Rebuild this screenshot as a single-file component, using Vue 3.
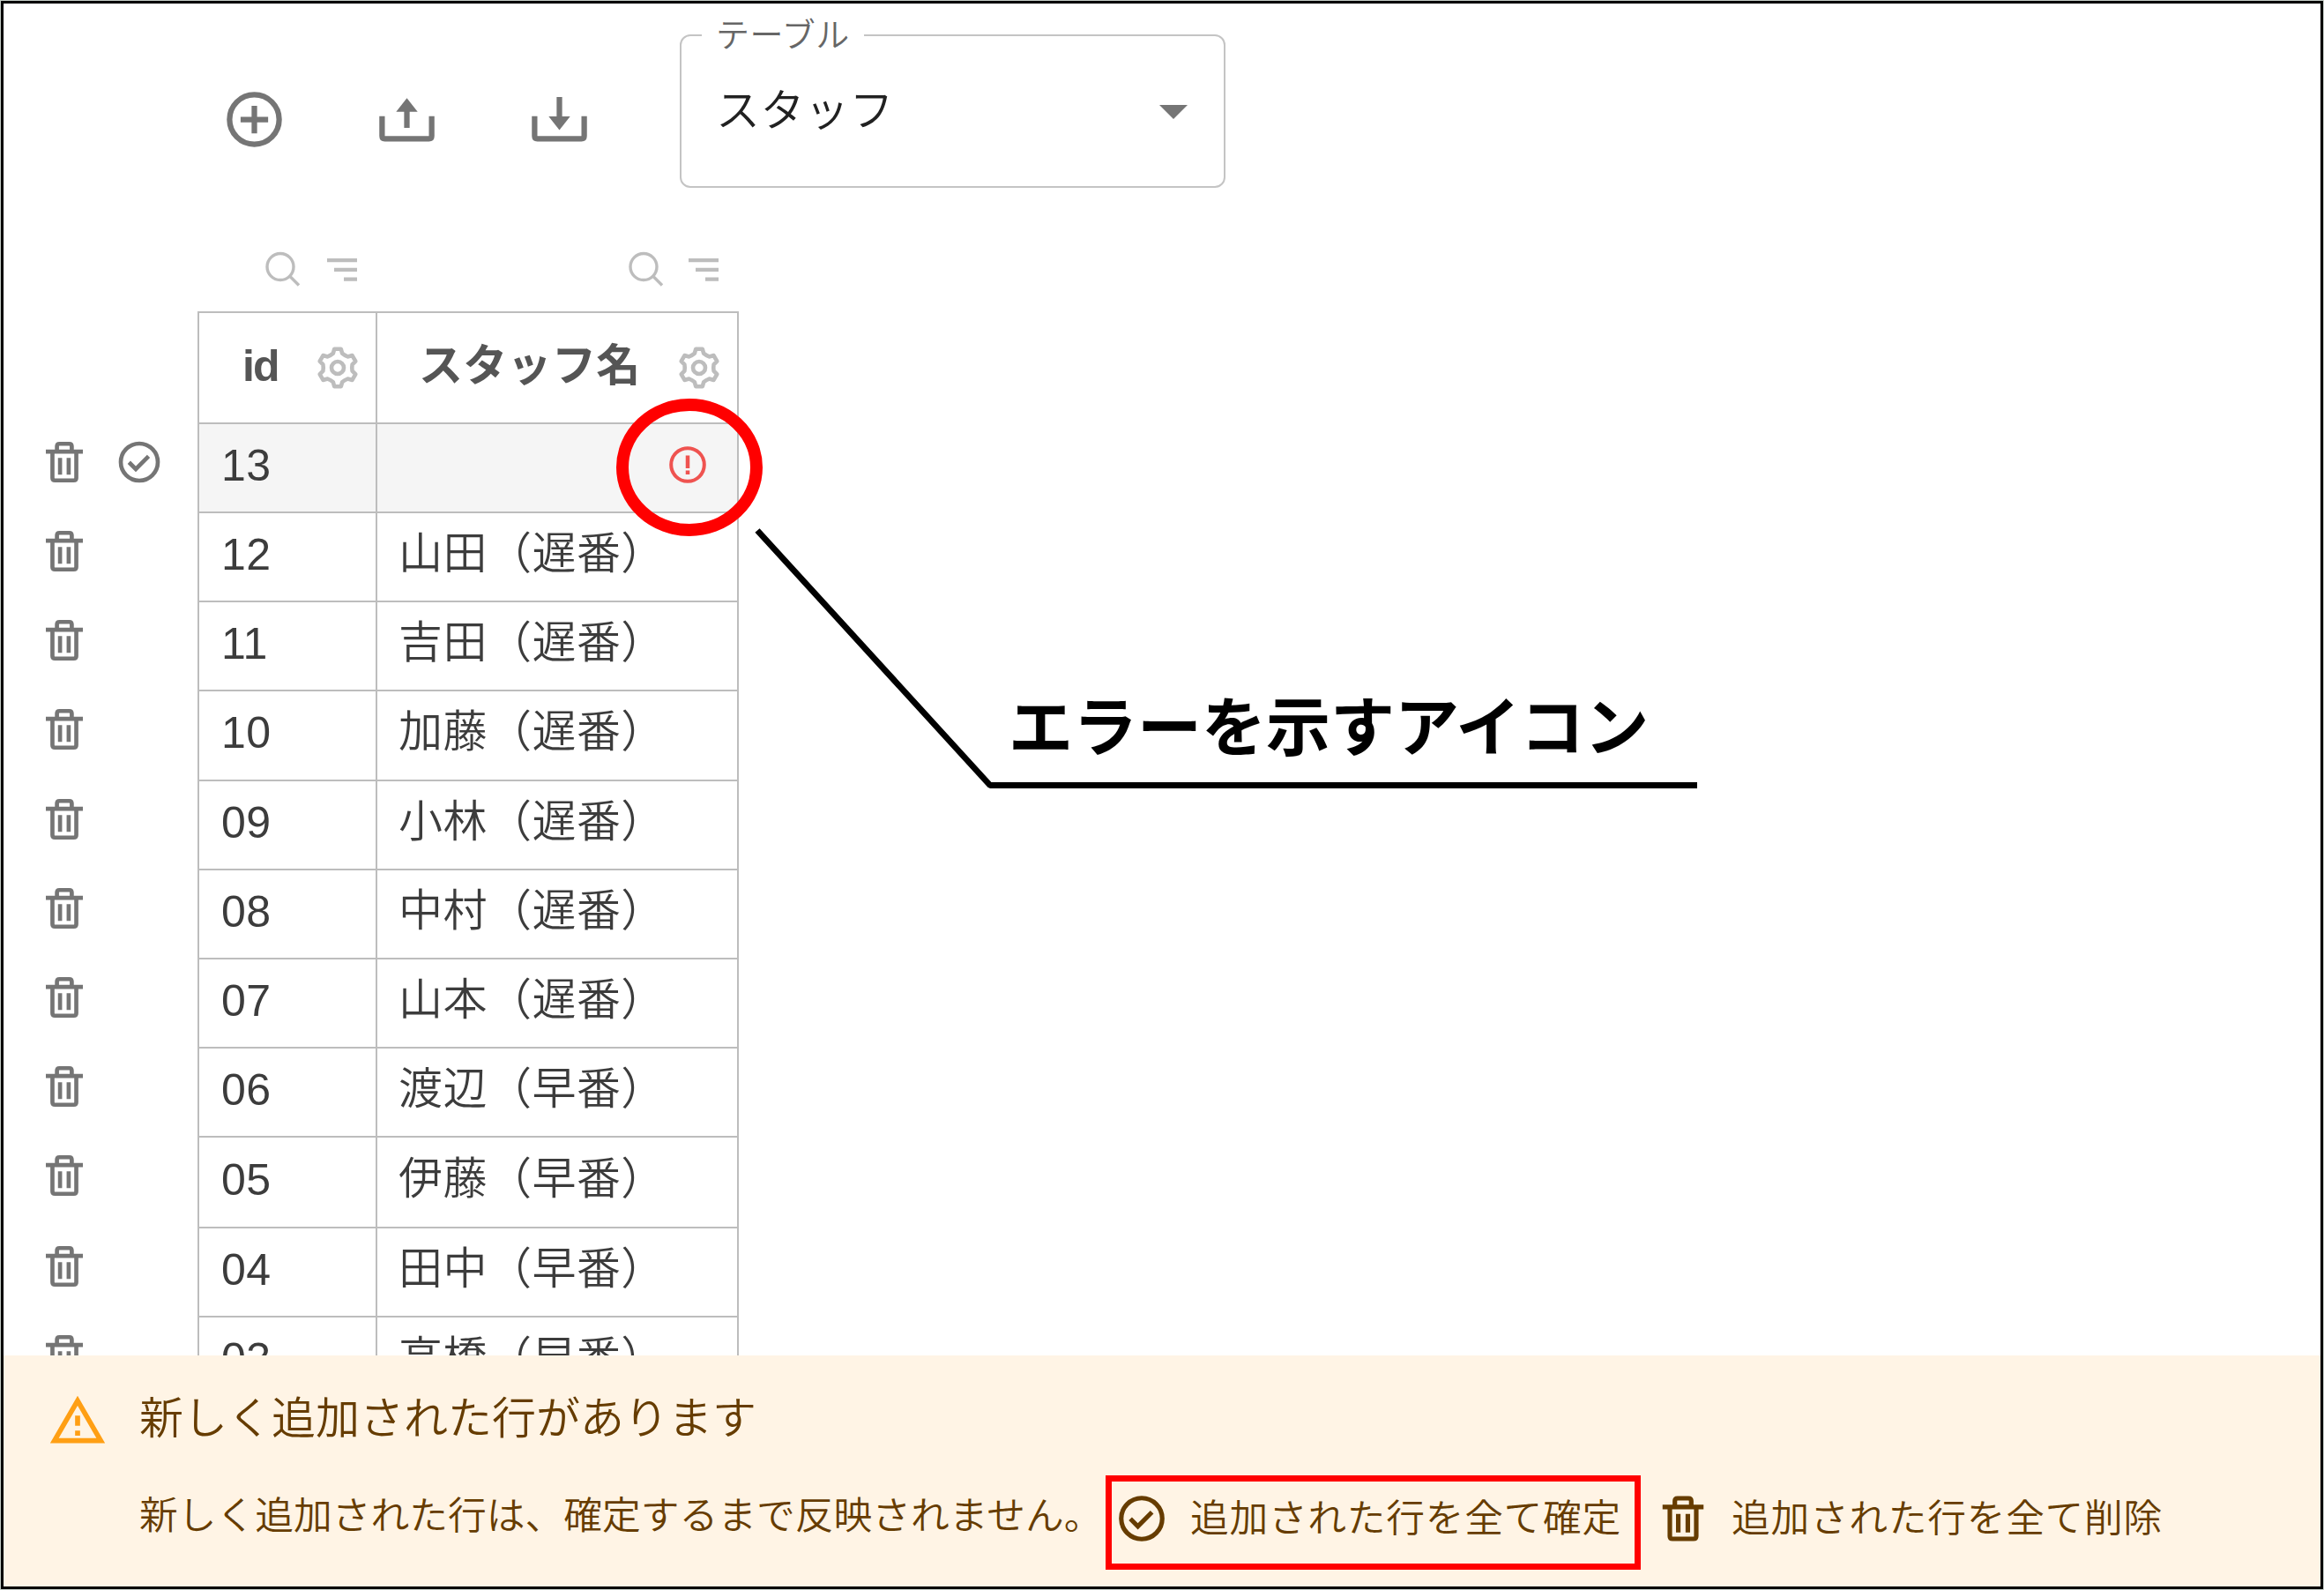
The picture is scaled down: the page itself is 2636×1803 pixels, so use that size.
<script setup>
import { ref } from 'vue'

const table = ref('スタッフ')

const columns = [
  { key: 'id', label: 'id' },
  { key: 'name', label: 'スタッフ名' }
]

const rows = ref([
  { id: '13', name: '', isNew: true },
  { id: '12', name: '山田（遅番）' },
  { id: '11', name: '吉田（遅番）' },
  { id: '10', name: '加藤（遅番）' },
  { id: '09', name: '小林（遅番）' },
  { id: '08', name: '中村（遅番）' },
  { id: '07', name: '山本（遅番）' },
  { id: '06', name: '渡辺（早番）' },
  { id: '05', name: '伊藤（早番）' },
  { id: '04', name: '田中（早番）' },
  { id: '03', name: '高橋（早番）' }
])
</script>

<template>
  <div class="page">
    <svg class="symbols" width="0" height="0">
      <symbol id="trash" viewBox="0 0 24 24">
        <g fill="none" stroke="currentColor" stroke-width="2">
          <path d="M3 6.900h18M8.400 6.700V4.300q0-1.200 1.200-1.200h4.800q1.200 0 1.200 1.200v2.400" />
          <path d="M6.200 6.700v13q0 1.200 1.200 1.200h9.200q1.200 0 1.200-1.200V6.700M9.900 10v8.100M14.100 10v8.100" />
        </g>
      </symbol>
      <symbol id="check" viewBox="0 0 24 24">
        <g fill="none" stroke="currentColor" stroke-width="2">
          <circle cx="12" cy="12" r="9" />
          <path d="M7 12.100l3.300 3.300 6.200-6.200" />
        </g>
      </symbol>
      <symbol id="gear" viewBox="-24 -24 48 48">
        <g fill="none" stroke="currentColor" stroke-width="4.6" stroke-linejoin="round">
          <circle cx="0" cy="0" r="7" />
          <path d="M-3.800-21.200H3.800L5.200-16.200Q8-13.800 11.400-12.600L16.500-13.900 20.300-7.300 16.600-3.600Q15.900 0 16.600 3.600L20.300 7.300 16.500 13.900 11.400 12.600Q8 13.800 5.200 16.200L3.800 21.200H-3.800L-5.200 16.200Q-8 13.800-11.400 12.600L-16.500 13.900-20.300 7.300-16.600 3.600Q-15.900 0-16.600-3.600L-20.300-7.300-16.500-13.900-11.400-12.600Q-8-13.800-5.200-16.200z" />
        </g>
      </symbol>
      <symbol id="search" viewBox="0 0 40 40">
        <g fill="none" stroke="currentColor" stroke-width="3.4">
          <circle cx="17" cy="17.500" r="15" />
          <path d="M27.500 28l10.500 10.500" />
        </g>
      </symbol>
      <symbol id="sort" viewBox="0 0 34 26">
        <path fill="currentColor" d="M0 0h34v4.200H0zM8 10.800h26v4.200H8zM19 21.600h15v4.200H19z" />
      </symbol>
    </svg>

    <div class="frame">
      <div class="toolbar">
        <svg class="tool" viewBox="0 0 24 24">
          <g fill="none" stroke="currentColor" stroke-width="2">
            <circle cx="12" cy="12" r="9" />
            <path d="M7 12h10M12 7v10" />
          </g>
        </svg>
        <svg class="tool" viewBox="0 0 24 24">
          <path d="M3 10.800v7.200q0 1 1 1h16q1 0 1-1v-7.200M12 8v7" fill="none" stroke="currentColor" stroke-width="2" />
          <path d="M12 4.200l3.900 5H8.100z" fill="currentColor" />
        </svg>
        <svg class="tool" viewBox="0 0 24 24">
          <path d="M3 10.800v7.200q0 1 1 1h16q1 0 1-1v-7.200M12 3.800v8" fill="none" stroke="currentColor" stroke-width="2" />
          <path d="M12 15.800l3.900-4.900H8.100z" fill="currentColor" />
        </svg>
        <fieldset class="select">
          <legend>テーブル</legend>
          <span>{{ table }}</span>
          <svg class="caret" viewBox="0 0 32 16"><path d="M0 0h32L16 16z" fill="#757575" /></svg>
        </fieldset>
      </div>

      <div class="filters">
        <div v-for="col in columns" :key="col.key" :class="['filter', col.key]">
          <svg class="search"><use href="#search" /></svg>
          <svg class="sort"><use href="#sort" /></svg>
        </div>
      </div>

      <div class="grid">
        <div class="row header">
          <div class="actions"></div>
          <div v-for="col in columns" :key="col.key" :class="['cell', col.key]">
            <span>{{ col.label }}</span>
            <svg class="gear"><use href="#gear" /></svg>
          </div>
        </div>
        <div v-for="row in rows" :key="row.id" :class="['row', { added: row.isNew }]">
          <div class="actions">
            <svg class="icon"><use href="#trash" /></svg>
            <svg v-if="row.isNew" class="icon"><use href="#check" /></svg>
          </div>
          <div class="cell id"><span>{{ row.id }}</span></div>
          <div class="cell name">
            <span>{{ row.name }}</span>
            <svg v-if="row.isNew" class="error" viewBox="0 0 42 42">
              <circle cx="21" cy="21" r="18.800" fill="none" stroke="currentColor" stroke-width="4" />
              <path d="M21 10.500v14.500M21 27.500v4.500" stroke="currentColor" stroke-width="4.500" />
            </svg>
          </div>
        </div>
      </div>

      <div class="alert">
        <svg class="warning" viewBox="0 0 24 24">
          <path d="M12 5.990L19.530 19H4.470L12 5.990M12 2L1 21h22L12 2zm1 14h-2v2h2v-2zm0-6h-2v4h2v-4z" fill="currentColor" />
        </svg>
        <div class="alert-content">
          <div class="alert-title">新しく追加された行があります</div>
          <div class="alert-body">
            <span class="message">新しく追加された行は、確定するまで反映されません。</span>
            <button class="confirm">
              <svg><use href="#check" /></svg>
              <span>追加された行を全て確定</span>
            </button>
            <button class="remove">
              <svg><use href="#trash" /></svg>
              <span>追加された行を全て削除</span>
            </button>
          </div>
        </div>
      </div>
    </div>

    <!-- callout drawn over the table -->
    <svg class="overlay" viewBox="0 0 2636 1803">
      <ellipse cx="782" cy="530" rx="76" ry="71" fill="none" stroke="#f00" stroke-width="14" />
      <path d="M859 601.500L1123 890.500H1925" fill="none" stroke="#000" stroke-width="7" stroke-linejoin="bevel" />
    </svg>
    <div class="callout">エラーを示すアイコン</div>
  </div>
</template>

<style>
body {
  margin: 0;
}
</style>

<style scoped>
.page {
  position: relative;
  box-sizing: border-box;
  width: 2636px;
  height: 1803px;
  padding: 1px;
  background: #c4ccc6;
  overflow: hidden;
  font-family: "Liberation Sans", "Noto Sans CJK JP", sans-serif;
}

.symbols {
  position: absolute;
}

.frame {
  box-sizing: border-box;
  height: 1801px;
  border: 3px solid #000;
  background: #fff;
  display: flex;
  flex-direction: column;
}

.toolbar {
  display: flex;
  height: 281px;
  flex-shrink: 0;
  padding-left: 247px;
  color: #757575;
}

.tool {
  width: 75px;
  height: 75px;
  margin: 94px 98px 0 0;
}

.select {
  box-sizing: border-box;
  width: 619px;
  height: 195px;
  margin: 14px 0 0 1px;
  padding: 0 41px 0 39px;
  border: 2px solid #c4c4c4;
  border-radius: 12px;
  display: flex;
  align-items: flex-start;
  justify-content: space-between;
  color: #212121;
  font-size: 50px;
  font-weight: 350;
  letter-spacing: 0.47px;
}

.select legend {
  margin-left: -16px;
  padding: 0 16px 0 16px;
  color: #666;
  font-size: 38px;
  line-height: 44px;
}

.select span {
  line-height: 60px;
  margin-top: 34px;
}

.caret {
  width: 32px;
  height: 16px;
  margin-top: 57px;
}

.filters {
  display: flex;
  height: 68px;
  flex-shrink: 0;
  padding-left: 220px;
  color: #bdbdbd;
}

.filter {
  display: flex;
  justify-content: flex-end;
  align-items: flex-start;
}

.filter.id {
  width: 202px;
  padding-right: 21px;
  box-sizing: border-box;
}

.filter.name {
  width: 410px;
  padding-right: 21px;
  box-sizing: border-box;
}

.search {
  width: 40px;
  height: 40px;
}

.sort {
  width: 34px;
  height: 26px;
  margin: 8px 0 0 30px;
}

.filter.name .sort {
  margin-left: 28px;
}

.grid {
  flex: 1;
  min-height: 0;
  overflow: hidden;
}

.row {
  display: flex;
  height: 101px;
}

.row:nth-child(5) {
  height: 102px;
}

.row:nth-child(10) {
  height: 103px;
}

.row.header {
  height: 126px;
}

.actions {
  box-sizing: border-box;
  width: 220px;
  padding: 17px 0 0 41px;
  color: #757575;
}

.icon {
  width: 56px;
  height: 56px;
  margin-right: 29px;
}

.cell {
  box-sizing: border-box;
  display: flex;
  align-items: center;
  border-top: 2px solid #bdbdbd;
  border-left: 2px solid #bdbdbd;
  color: #3c3c3c;
  font-size: 50px;
  letter-spacing: 0.47px;
  line-height: 60px;
}

.cell.id {
  width: 202px;
  padding-left: 25px;
  padding-bottom: 6px;
}

.cell.name {
  width: 412px;
  border-right: 2px solid #bdbdbd;
  padding-left: 24px;
  padding-bottom: 8px;
  font-weight: 350;
}

.cell span {
  flex: 1;
}

.row.added .cell {
  background: #f5f5f5;
}

.header .cell {
  color: #555;
  font-weight: bold;
  letter-spacing: 0.3px;
  padding-bottom: 4px;
}

.header .cell.id {
  padding-left: 49px;
  letter-spacing: -2px;
}

.header .cell.name {
  padding-left: 47px;
}

.gear {
  width: 48px;
  height: 48px;
  margin: 4px 19px 0 0;
  color: #bdbdbd;
}

.error {
  width: 42px;
  height: 42px;
  margin: 0 35px 0 0;
  color: #ef5350;
}

.alert {
  box-sizing: border-box;
  height: 262px;
  flex-shrink: 0;
  display: flex;
  padding: 40px 0 0 50px;
  background: #fff4e5;
  color: #663c00;
}

.warning {
  width: 68px;
  height: 68px;
  color: #ff9f14;
}

.alert-content {
  padding-left: 36px;
  font-weight: 350;
}

.alert-title {
  margin-top: 2px;
  font-size: 50px;
  line-height: 60px;
}

.alert-body {
  display: flex;
  align-items: flex-start;
  margin-top: 34px;
  font-size: 43.75px;
  line-height: 86px;
}

.message {
  width: 1096px;
  margin-top: 3px;
  white-space: nowrap;
}

button {
  box-sizing: border-box;
  display: flex;
  align-items: center;
  height: 107px;
  margin: 0;
  padding: 0;
  border: 7px solid transparent;
  background: none;
  color: inherit;
  font: inherit;
  letter-spacing: 0.7px;
  white-space: nowrap;
}

button svg {
  width: 62px;
  height: 62px;
  flex-shrink: 0;
  margin-top: -9px;
}

button span {
  margin: -10px 0 0 24px;
}

.confirm {
  width: 607px;
  padding-left: 3px;
  border-color: #f00;
}

.remove {
  padding-left: 10px;
}

.overlay {
  position: absolute;
  left: 0;
  top: 0;
  width: 2636px;
  height: 1803px;
}

.callout {
  position: absolute;
  left: 1144px;
  top: 782px;
  font-size: 73px;
  line-height: 88px;
  font-weight: bold;
  white-space: nowrap;
  color: #000;
}
</style>
